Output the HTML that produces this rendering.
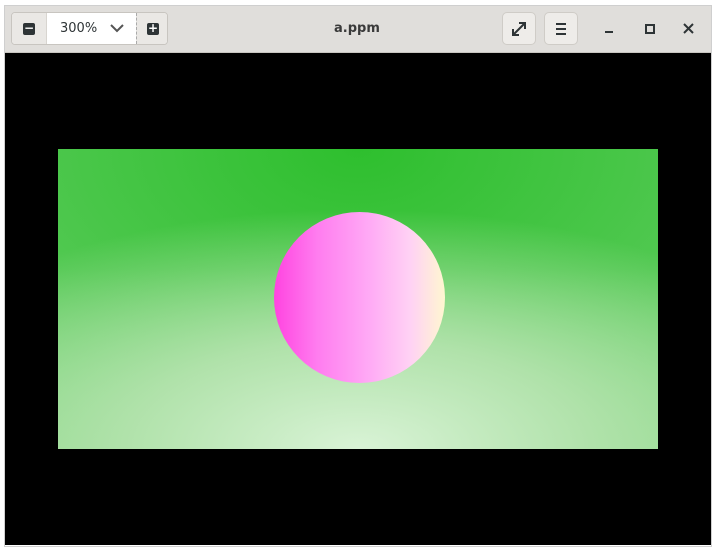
<!DOCTYPE html>
<html><head><style>
body{margin:0;width:720px;height:551px;background:#fff;position:relative;overflow:hidden;font-family:"DejaVu Sans","Liberation Sans",sans-serif}
.win{position:absolute;left:4px;top:5px;width:708px;height:542px;background:#fff;border:1px solid #cfcfcf;box-sizing:border-box}
.hb{position:absolute;left:5px;top:6px;width:706px;height:47px;background:#e0dedb;border-bottom:1px solid #c8c5c0;box-sizing:border-box}
.blk{position:absolute;left:5px;top:53px;width:706px;height:492px;background:#000}
.img{position:absolute;left:58px;top:149px;width:600px;height:300px;
background:radial-gradient(ellipse 520px 240px at 50% 100%,#d9f3d6 0%,#b0e2aa 45%,rgba(140,215,135,0) 100%),
linear-gradient(180deg,rgba(0,0,0,0) 0%,rgba(0,0,0,0) 40%,rgba(150,220,145,.6) 100%),
radial-gradient(ellipse 500px 300px at 50% 0%,#2ebf2e 0%,#48c648 55%,#60cc60 100%),#6fd06f}
.sph{position:absolute;left:274px;top:212px;width:171px;height:171px;border-radius:50%;
background:linear-gradient(90deg,#ff44e0 0%,#ff7cef 25%,#ffa9f5 55%,#ffd2f4 80%,#fff7d0 100%)}
.grp{position:absolute;left:11px;top:12px;width:157px;height:33px;border:1px solid #c8c5c0;border-radius:4px;background:#fff;box-sizing:border-box;overflow:hidden}
.btn{position:absolute;top:0;height:31px;background:#eae8e5}
.sq{position:absolute;width:12px;height:12px;background:#2e3436;border-radius:2px;color:#fff;font-size:12px;line-height:11px;text-align:center;font-weight:bold}
.rb{position:absolute;top:12px;width:34px;height:33px;border:1px solid #cfccc7;border-radius:5px;background:#eeece9;box-sizing:border-box}
</style></head><body>
<div class="win"></div>
<div class="hb"></div>
<div class="grp">
 <div class="btn" style="left:0;width:34px;border-right:1px solid #d8d5d0"><div class="sq" style="left:11px;top:10px">−</div></div>
 <div style="position:absolute;left:48px;top:8px;font-size:13px;color:#2e3436">300%</div>
 <svg style="position:absolute;left:98px;top:10px" width="14" height="10"><path d="M1 2 L7 8 L13 2" fill="none" stroke="#555" stroke-width="2"/></svg>
 <div class="btn" style="left:124px;width:32px;border-left:1px dashed #aaa"><div class="sq" style="left:10px;top:10px">+</div></div>
</div>
<div style="position:absolute;left:334px;top:21px;font-size:13px;font-weight:bold;color:#3a3a3a">a.ppm</div>
<div class="rb" style="left:502px"><svg width="32" height="31"><path d="M11 21 L21 11 M16 10 H22 V16 M10 16 V22 H16" fill="none" stroke="#2e3436" stroke-width="2"/></svg></div>
<div class="rb" style="left:544px"><svg width="32" height="31"><path d="M11 11h10M11 16h10M11 21h10" stroke="#2e3436" stroke-width="2"/></svg></div>
<div style="position:absolute;left:605px;top:31px;width:8px;height:2px;background:#2e3436"></div>
<div style="position:absolute;left:645px;top:24px;width:6px;height:6px;border:2px solid #2e3436"></div>
<svg style="position:absolute;left:683px;top:23px" width="11" height="11"><path d="M1 1L10 10M10 1L1 10" stroke="#2e3436" stroke-width="2"/></svg>
<div class="blk"></div>
<div class="img"></div>
<div class="sph"></div>
</body></html>
